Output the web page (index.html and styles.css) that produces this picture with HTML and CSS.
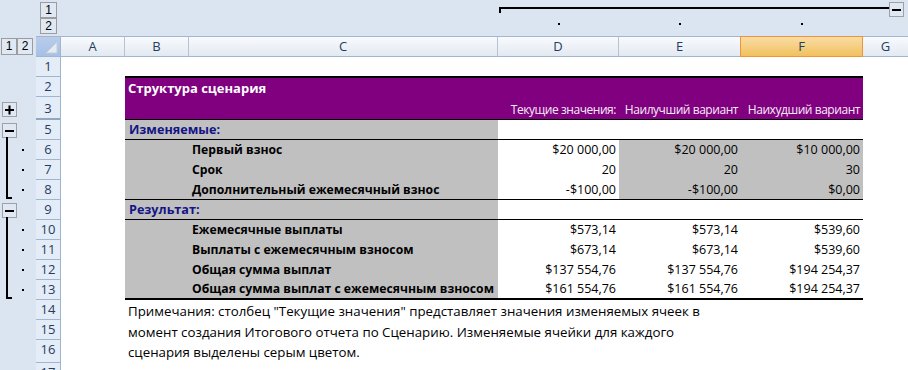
FILE: index.html
```html
<!DOCTYPE html>
<html lang="ru">
<head>
<meta charset="utf-8">
<title>Структура сценария</title>
<link rel="stylesheet" href="styles.css">
</head>
<body>
<div class="app">
  <div class="band">
    <div class="band-gutter"></div>
    <div class="lvl-col">
      <span class="lvl">1</span>
      <span class="lvl">2</span>
    </div>
    <div class="colgroup">
      <div class="colbar"></div>
      <div class="coldots">
        <span class="dcell d"><i class="dot"></i></span>
        <span class="dcell e"><i class="dot"></i></span>
        <span class="dcell f"><i class="dot"></i></span>
      </div>
    </div>
    <span class="obtn colbtn"><svg width="13" height="13" viewBox="0 0 13 13"><rect x="2" y="6" width="9" height="2" fill="#000"/></svg></span>
  </div>

  <div class="colheads">
    <div class="lvl-row">
      <span class="lvl">1</span>
      <span class="lvl">2</span>
    </div>
    <div class="corner"><svg width="24" height="19" viewBox="0 0 24 19"><polygon points="21,5 21,16 10,16" fill="#e6ebf2" stroke="#c3ccd8" stroke-width="1"/></svg></div>
    <div class="ch col-a">A</div>
    <div class="ch col-b">B</div>
    <div class="ch col-c">C</div>
    <div class="ch col-d">D</div>
    <div class="ch col-e">E</div>
    <div class="ch col-f sel">F</div>
    <div class="ch col-g">G</div>
  </div>

  <div class="body">
    <div class="gutter">
      <span class="obtn plus"><svg width="13" height="13" viewBox="0 0 13 13"><rect x="2" y="6" width="9" height="2" fill="#000"/><rect x="5.5" y="2.5" width="2" height="9" fill="#000"/></svg></span>
      <span class="obtn minus1"><svg width="13" height="13" viewBox="0 0 13 13"><rect x="2" y="6" width="9" height="2" fill="#000"/></svg></span>
      <span class="bracket br1"></span>
      <i class="dot g6"></i><i class="dot g7"></i><i class="dot g8"></i>
      <span class="obtn minus2"><svg width="13" height="13" viewBox="0 0 13 13"><rect x="2" y="6" width="9" height="2" fill="#000"/></svg></span>
      <span class="bracket br2"></span>
      <i class="dot g10"></i><i class="dot g11"></i><i class="dot g12"></i><i class="dot g13"></i>
    </div>

    <div class="rowheads">
      <div class="rh">1</div>
      <div class="rh">2</div>
      <div class="rh hid">3</div>
      <div class="rh">5</div>
      <div class="rh">6</div>
      <div class="rh">7</div>
      <div class="rh">8</div>
      <div class="rh">9</div>
      <div class="rh">10</div>
      <div class="rh">11</div>
      <div class="rh">12</div>
      <div class="rh">13</div>
      <div class="rh">14</div>
      <div class="rh">15</div>
      <div class="rh">16</div>
      <div class="rh">17</div>
    </div>

    <div class="cells">
      <div class="report">
        <div class="title">
          <div class="title-text">Структура сценария</div>
          <div class="heads">
            <span></span>
            <span>Текущие значения:</span>
            <span>Наилучший вариант</span>
            <span>Наихудший вариант</span>
          </div>
        </div>

        <div class="row line">
          <div class="sec-label">Изменяемые:</div>
          <div></div><div></div><div></div>
        </div>
        <div class="row">
          <div class="g"></div><div class="g lab">Первый взнос</div>
          <div class="val">$20 000,00</div><div class="g val">$20 000,00</div><div class="g val">$10 000,00</div>
        </div>
        <div class="row">
          <div class="g"></div><div class="g lab">Срок</div>
          <div class="val">20</div><div class="g val">20</div><div class="g val">30</div>
        </div>
        <div class="row line">
          <div class="g"></div><div class="g lab">Дополнительный ежемесячный взнос</div>
          <div class="val">-$100,00</div><div class="g val">-$100,00</div><div class="g val">$0,00</div>
        </div>

        <div class="row line">
          <div class="sec-label">Результат:</div>
          <div></div><div></div><div></div>
        </div>
        <div class="row">
          <div class="g"></div><div class="g lab">Ежемесячные выплаты</div>
          <div class="val">$573,14</div><div class="val">$573,14</div><div class="val">$539,60</div>
        </div>
        <div class="row">
          <div class="g"></div><div class="g lab">Выплаты с ежемесячным взносом</div>
          <div class="val">$673,14</div><div class="val">$673,14</div><div class="val">$539,60</div>
        </div>
        <div class="row">
          <div class="g"></div><div class="g lab">Общая сумма выплат</div>
          <div class="val">$137 554,76</div><div class="val">$137 554,76</div><div class="val">$194 254,37</div>
        </div>
        <div class="row last">
          <div class="g"></div><div class="g lab">Общая сумма выплат с ежемесячным взносом</div>
          <div class="val">$161 554,76</div><div class="val">$161 554,76</div><div class="val">$194 254,37</div>
        </div>
      </div>
      <div class="note">
        Примечания: столбец "Текущие значения" представляет значения изменяемых ячеек в<br>
        момент создания Итогового отчета по Сценарию. Изменяемые ячейки для каждого<br>
        сценария выделены серым цветом.
      </div>
    </div>
  </div>
</div>
</body>
</html>
```

FILE: styles.css
```css
* { box-sizing: border-box; margin: 0; padding: 0; }

html, body { width: 908px; height: 370px; overflow: hidden; background: #fff; }

body {
  font-family: "Open Sans", "Noto Sans", sans-serif;
  font-size: 12.5px;
  color: #000;
}

.app { width: 908px; height: 370px; display: flex; flex-direction: column; }

/* ---------- top outline band ---------- */
.band {
  height: 36px;
  flex: none;
  background: #dbe5f1;
  display: flex;
  align-items: flex-start;
}
.band-gutter { width: 36px; flex: none; }
.lvl-col {
  width: 25px;
  flex: none;
  display: flex;
  flex-direction: column;
  align-items: center;
  padding-top: 2px;
}
.lvl {
  display: block;
  width: 17px;
  height: 16px;
  border: 1px solid #9c9c9c;
  background: #dfe8f3;
  font-family: "Liberation Sans", Arial, sans-serif;
  font-size: 12px;
  line-height: 14px;
  text-align: center;
  color: #000;
}
.colgroup { width: 391px; margin-left: 437px; flex: none; }
.colbar {
  margin-top: 7px;
  margin-left: 1px;
  height: 6px;
  border-top: 2px solid #000;
  border-left: 2px solid #000;
}
.coldots { display: flex; margin-top: 10px; }
.dcell { display: flex; justify-content: center; }
.dcell.d { width: 121px; }
.dcell.e { width: 122px; }
.dcell.f { width: 122px; }
.dot { display: block; width: 2px; height: 2px; background: #000; }

.obtn {
  display: flex;
  align-items: center;
  justify-content: center;
  width: 15px;
  height: 15px;
  border: 1px solid #a0a0a0;
  background: #dfe8f3;
}
.colbtn { margin-top: 2px; }

/* ---------- column headers ---------- */
.colheads {
  height: 21px;
  flex: none;
  display: flex;
  background: #dbe5f1;
}
.lvl-row {
  width: 36px;
  flex: none;
  display: flex;
  padding: 2px 0 0 1px;
}
.lvl-row .lvl { width: 16px; height: 17px; line-height: 15px; }
.corner {
  width: 25px;
  flex: none;
  background: linear-gradient(#b9cdea, #a6c0e6);
  border-top: 1px solid #a5b6cc;
  border-bottom: 1px solid #9eb6ce;
  border-right: 1px solid #9eb6ce;
  overflow: hidden;
}
.corner svg { display: block; }
.ch {
  flex: none;
  height: 21px;
  background: linear-gradient(#f8fafd, #e3e9f2);
  border-top: 1px solid #a5b6cc;
  border-bottom: 1px solid #9eb6ce;
  border-right: 1px solid #b6c3d5;
  color: #243d5f;
  text-align: center;
  line-height: 19px;
  font-size: 13px;
}
.col-a { width: 64px; }
.col-b { width: 64px; }
.col-c { width: 309px; }
.col-d { width: 121px; }
.col-e { width: 122px; }
.col-f { width: 122px; }
.col-g { flex: 1; border-right: none; }
.ch.sel {
  background: linear-gradient(#f9dca6, #f1c15e);
  border-top-color: #f29436;
  border-bottom-color: #f29436;
  border-right-color: #f29436;
  border-left: 1px solid #f29436;
  margin-left: -1px;
  width: 123px;
}

/* ---------- body ---------- */
.body { flex: 1; display: flex; min-height: 0; }

.gutter,
.rowheads {
  display: grid;
  grid-template-rows: 20px 20px 23px repeat(9, 20px) 20px 20px 23px 20px;
}

.gutter {
  width: 36px;
  flex: none;
  background: #dbe5f1;
  grid-template-columns: 20px 16px;
}
.gutter .obtn { grid-column: 1; margin-left: 2px; align-self: center; }
.gutter .plus { grid-row: 3; align-self: end; margin-bottom: 3px; }
.gutter .minus1 { grid-row: 4; }
.gutter .minus2 { grid-row: 8; }
.bracket {
  grid-column: 1;
  margin-left: 6px;
  width: 6px;
  border-left: 2px solid #000;
  border-bottom: 2px solid #000;
  margin-top: -3px;
  margin-bottom: 1px;
}
.br1 { grid-row: 5 / 8; }
.br2 { grid-row: 9 / 13; }
.gutter .dot { grid-column: 2; margin-left: 2px; align-self: center; }
.g6 { grid-row: 5; }
.g7 { grid-row: 6; }
.g8 { grid-row: 7; }
.g10 { grid-row: 9; }
.g11 { grid-row: 10; }
.g12 { grid-row: 11; }
.g13 { grid-row: 12; }

.rowheads {
  width: 25px;
  flex: none;
  background: #e4ecf7;
  border-right: 1px solid #9eb6ce;
}
.rh {
  border-bottom: 1px solid #9eb6ce;
  color: #243d5f;
  text-align: center;
  font-size: 13px;
  line-height: 19px;
}
.rh.hid { border-bottom: 2px solid #8ea7c3; line-height: 22px; }

.cells {
  flex: 1;
  padding-top: 19px;
  padding-left: 64px;
  background: #fff;
}

.report { width: 738px; }

.title {
  height: 44px;
  background: #800080;
  border-top: 2px solid #000;
  border-bottom: 1px solid #000;
  color: #fff;
}
.title-text {
  height: 20px;
  line-height: 21px;
  padding-left: 3px;
  font-weight: bold;
  font-size: 13px;
}
.heads {
  display: grid;
  grid-template-columns: 373px 121px 122px 122px;
  padding-top: 2px;
  line-height: 20px;
  font-size: 12px;
  letter-spacing: -0.45px;
  color: #f6eef6;
}
.heads span { text-align: right; padding-right: 3px; white-space: nowrap; }

.row {
  display: grid;
  grid-template-columns: 64px 309px 121px 122px 122px;
  height: 20px;
  line-height: 20px;
}
.row.line { border-bottom: 1px solid #000; line-height: 19px; }
.row.last { border-bottom: 2px solid #000; line-height: 18px; }
.row > div { white-space: nowrap; }

.sec-label {
  grid-column: 1 / 3;
  background: #c0c0c0;
  color: #141486;
  font-weight: bold;
  font-size: 12.6px;
  padding-left: 4px;
}
.g { background: #c0c0c0; }
.lab { font-weight: bold; font-size: 12.2px; padding-left: 3px; }
.val { text-align: right; padding-right: 3px; }

.note {
  padding-left: 3px;
  padding-top: 1px;
  line-height: 20.5px;
  font-size: 13.3px;
  white-space: nowrap;
}
```
